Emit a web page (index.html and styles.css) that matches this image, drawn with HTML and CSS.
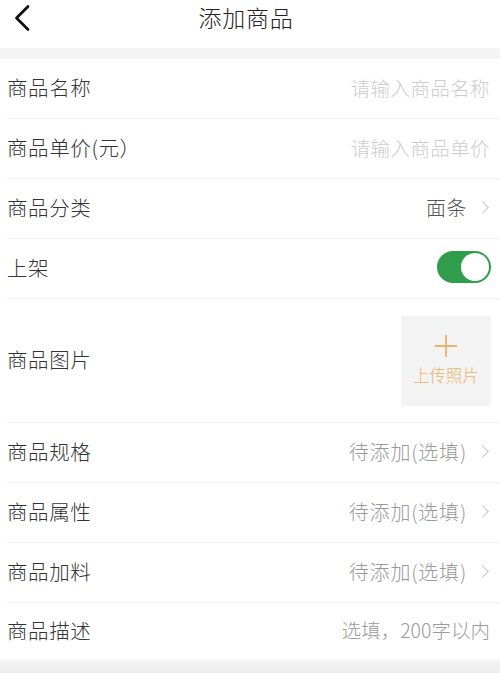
FILE: index.html
```html
<!DOCTYPE html>
<html lang="zh">
<head>
<meta charset="utf-8">
<link rel="stylesheet" href="styles.css">
</head>
<body>
<div class="page">
  <header class="header">
    <svg class="back" width="20" height="28" viewBox="0 0 20 28"><path d="M16 2.5 L4.5 14 L16 25.5" fill="none" stroke="#111" stroke-width="2.8" stroke-linecap="round" stroke-linejoin="round"/></svg>
    <h1 class="title">添加商品</h1>
  </header>
  <div class="gap"></div>
  <ul class="list">
    <li class="row"><span class="label">商品名称</span><span class="placeholder">请输入商品名称</span></li>
    <li class="row"><span class="label">商品单价(元）</span><span class="placeholder">请输入商品单价</span></li>
    <li class="row"><span class="label">商品分类</span><span class="value dark">面条</span><span class="chev"></span></li>
    <li class="row"><span class="label">上架</span><span class="switch"><span class="knob"></span></span></li>
    <li class="row row-img"><span class="label">商品图片</span>
      <div class="upload">
        <svg width="24" height="24" viewBox="0 0 24 24"><path d="M12 1 V23 M1 12 H23" stroke="#e9b36a" stroke-width="1.8" fill="none"/></svg>
        <span class="upload-text">上传照片</span>
      </div>
    </li>
    <li class="row"><span class="label">商品规格</span><span class="value">待添加(选填)</span><span class="chev"></span></li>
    <li class="row"><span class="label">商品属性</span><span class="value">待添加(选填)</span><span class="chev"></span></li>
    <li class="row"><span class="label">商品加料</span><span class="value">待添加(选填)</span><span class="chev"></span></li>
    <li class="row last"><span class="label">商品描述</span><span class="value desc">选填，200字以内</span></li>
  </ul>
  <div class="footer"></div>
</div>
</body>
</html>
```

FILE: styles.css
```css
html, body {
  margin: 0;
  padding: 0;
  background: #fff;
}
body {
  font-family: "Noto Sans CJK SC", "Noto Sans", sans-serif;
  font-weight: 300;
  color: #333;
}
.page {
  width: 500px;
  height: 673px;
  display: flex;
  flex-direction: column;
  overflow: hidden;
}
.header {
  height: 48px;
  display: flex;
  align-items: center;
  justify-content: center;
  position: relative;
}
.back {
  position: absolute;
  left: 12px;
  top: 4px;
}
.title {
  margin: 0;
  font-size: 23px;
  font-weight: 300;
  color: #222;
  letter-spacing: 0.8px;
  margin-left: -8px;
  margin-top: -15px;
}
.gap {
  height: 11px;
  background: #f4f4f4;
}
.list {
  list-style: none;
  margin: 0;
  padding: 0 0 0 7px;
}
.row {
  height: 59px;
  box-sizing: border-box;
  height: 60px;
  display: flex;
  align-items: center;
  border-bottom: 1px solid #f3f3f3;
  padding-right: 10px;
  padding-bottom: 3px;
}
.row-img {
  height: 124px;
}
.row.last {
  height: 56px;
  border-bottom: none;
}
.label {
  font-size: 20.5px;
  color: #333;
  flex: 1;
  letter-spacing: 0.6px;
}
.placeholder {
  font-size: 19.5px;
  color: #cdcdcd;
  letter-spacing: 0.4px;
}
.value {
  font-size: 20px;
  color: #9a9a9a;
  letter-spacing: 0.8px;
}
.value.dark {
  color: #555;
  letter-spacing: 0.5px;
}
.value.desc {
  font-size: 19.5px;
  letter-spacing: 0;
}
.chev {
  width: 8px;
  height: 8px;
  border-top: 1.4px solid #c4c4c4;
  border-right: 1.4px solid #c4c4c4;
  transform: rotate(45deg);
  margin-left: 11px;
  margin-right: 3px;
}
.switch {
  width: 54px;
  height: 32px;
  border-radius: 16px;
  background: #2f9d4b;
  display: flex;
  align-items: center;
  justify-content: flex-end;
  padding: 0 2px;
  box-sizing: border-box;
  margin-right: -1px;
}
.knob {
  width: 28px;
  height: 28px;
  border-radius: 50%;
  background: #fff;
}
.upload {
  width: 90px;
  height: 90px;
  background: #f3f3f3;
  display: flex;
  flex-direction: column;
  align-items: center;
  justify-content: center;
  gap: 5px;
  margin-right: -1px;
  margin-top: 3px;
}
.upload-text {
  font-size: 16.5px;
  color: #e9b36a;
}
.footer {
  flex: 1;
  background: linear-gradient(#f6f6f6, #ececec);
}
```
